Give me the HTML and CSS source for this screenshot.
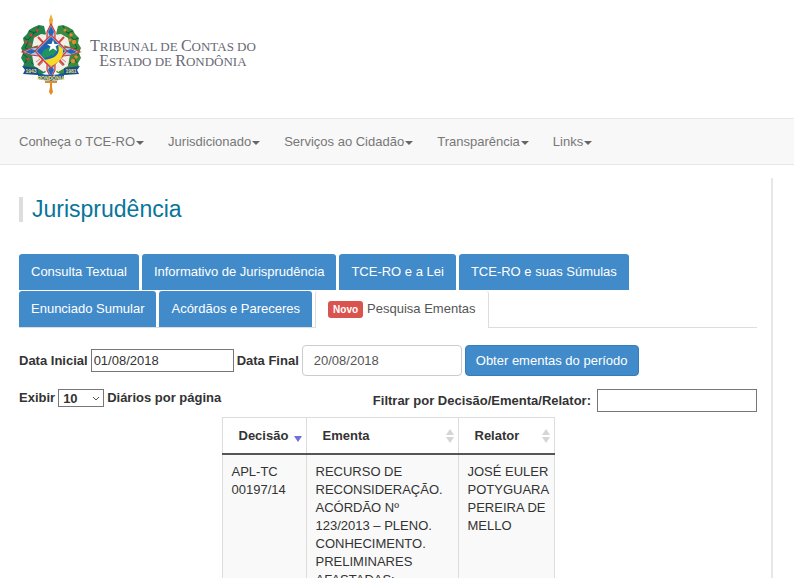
FILE: index.html
```html
<!DOCTYPE html>
<html lang="pt-BR">
<head>
  <meta charset="UTF-8">
  <meta name="viewport" content="width=device-width, initial-scale=1.0">
  <title>Jurisprudência - Tribunal de Contas do Estado de Rondônia</title>
  <link rel="stylesheet" href="styles.css">
</head>
<body>
  <header class="header">
    <svg class="brasao" viewBox="0 0 62 82" aria-hidden="true">
      <!-- ramos -->
      <path d="M24 12L19 11L14 13L9 16L7 20L3 24L4 29L1 34L3 39L1 44L4 49L3 53L8 58L20 61L26 58L14 38L26 20z" fill="#23834a"/>
      <path d="M38 12L43 11L48 13L53 16L55 20L59 24L58 29L61 34L59 39L61 44L58 49L59 53L54 58L42 61L36 58L48 38L36 20z" fill="#3a8a3f"/>
      <path d="M19 12L15 19L9 17M14 19L8 26L4 24M8 28L5 34L10 36M3 40L8 44L5 49M11 48L17 54M43 12L47 19L53 17M48 19L54 26L58 24M54 28L57 34L52 36M59 40L54 44L57 49M51 48L45 54" fill="none" stroke="#0b5b35"/>
      <g fill="#d7442c">
        <circle cx="17" cy="16" r="1.500"/><circle cx="11" cy="21" r="1.500"/><circle cx="15" cy="23" r="1.500"/><circle cx="6" cy="28" r="1.500"/><circle cx="10" cy="30" r="1.500"/><circle cx="8" cy="45" r="1.500"/>
      </g>
      <g fill="#e98a2e">
        <circle cx="45" cy="16" r="1.500"/><circle cx="51" cy="21" r="1.800"/><circle cx="54" cy="28" r="2.200"/><circle cx="50" cy="26" r="1.500"/><circle cx="56" cy="43" r="1.800"/><circle cx="53" cy="47" r="2.200"/>
      </g>
      <path d="M14 24L21 20L28 21L23 30L12 33zM48 24L41 20L34 21L39 30L50 33zM12 41L20 43L27 53L24 58L14 52zM50 41L42 43L35 53L38 58L48 52z" fill="#f3eee8"/>
      <path d="M16 48L20 45M19 52L23 48M46 48L42 45M43 52L39 48" stroke="#b88f86"/>
      <path d="M18 23L44 51M44 23L18 51" stroke="#cf4a45" stroke-width="2"/>
      <!-- espada -->
      <path d="M31 0L33 6L32 14H30L29 6z" fill="#efab37"/>
      <path d="M30 66H32V73L33 78L31 81L29 78L30 73z" fill="#e28b25"/>
      <path d="M25 67H37V69H25z" fill="#e28b25"/>
      <!-- escudo -->
      <path d="M31 10L35 18L35 25L43 33L51 34L60 38L51 41L43 42L35 50L35 56L31 64L27 56L27 50L19 42L11 41L2 38L11 34L19 33L27 25L27 18z" fill="#9bd0f3" stroke="#d93735" stroke-width="1.200"/>
      <path d="M31 12L34 18L31 24L28 18zM31 62L34 56L31 51L28 56zM5 38L11 35L17 37L11 40zM57 38L51 35L45 37L51 40z" fill="#2565b5"/>
      <path d="M31 21L47 37L31 54L15 37z" fill="#9bd0f3" stroke="#d93735" stroke-width="1.200"/>
      <path d="M31 23L45 37L31 52L17 37z" fill="#1e63b4"/>
      <path d="M31 24L20 36L25 41L30 39L33 42L38 35L34 31z" fill="#20955c"/>
      <path d="M31 23L38 30L29 36L20 40L17 37z" fill="#1e63b4"/>
      <path d="M24 36L30 33L34 38L30 42L24 44L21 41z" fill="#20955c"/>
      <path d="M38 31Q42 44 24 46L31 52Q44 47 43 35z" fill="#f8dc23"/>
      <path d="M33 26L34.500 30L39 30L35.500 32.500L37 37L33 34.500L29 37L30.500 32.500L27 30L31.500 30z" fill="#fff"/>
      <!-- faixa -->
      <path d="M2 52L18 54V61L3 60L5 56zM60 52L44 54V61L59 60L57 56z" fill="#154f92"/>
      <path d="M18 59Q31 63 44 59V65Q31 68 18 65z" fill="#1c5b9f"/>
      <g class="faixa-texto">
        <text x="11" y="59">1943</text>
        <text x="51" y="59">1981</text>
        <text x="31" y="66">RONDÔNIA</text>
      </g>
    </svg>
    <div class="orgao">
      <div><b>T</b>ribunal de <b>C</b>ontas do</div>
      <div><b>E</b>stado de <b>R</b>ondônia</div>
    </div>
  </header>

  <nav class="navbar">
    <a href="#">Conheça o TCE-RO<span class="caret"></span></a>
    <a href="#">Jurisdicionado<span class="caret"></span></a>
    <a href="#">Serviços ao Cidadão<span class="caret"></span></a>
    <a href="#">Transparência<span class="caret"></span></a>
    <a href="#">Links<span class="caret"></span></a>
  </nav>

  <main class="conteudo">
    <h1 class="titulo">Jurisprudência</h1>

    <div class="abas">
      <a class="aba" href="#">Consulta Textual</a>
      <a class="aba" href="#">Informativo de Jurisprudência</a>
      <a class="aba" href="#">TCE-RO e a Lei</a>
      <a class="aba" href="#">TCE-RO e suas Súmulas</a>
      <a class="aba" href="#">Enunciado Sumular</a>
      <a class="aba" href="#">Acórdãos e Pareceres</a>
      <a class="aba ativa" href="#"><span class="novo">Novo</span>Pesquisa Ementas</a>
    </div>

    <form class="periodo">
      <label for="dataInicial">Data Inicial</label>
      <input type="text" id="dataInicial" class="data-inicial" value="01/08/2018">
      <label for="dataFinal">Data Final</label>
      <input type="text" id="dataFinal" class="data-final" value="20/08/2018">
      <button type="button" class="btn">Obter ementas do período</button>
    </form>

    <div class="filtros">
      <div class="exibir">
        <label for="qtdPagina">Exibir</label>
        <span class="select-wrap">
          <select id="qtdPagina">
            <option>10</option>
            <option>25</option>
            <option>50</option>
          </select>
          <svg class="seta" viewBox="0 0 8 5" aria-hidden="true"><path d="M1 1L4 4L7 1" fill="none" stroke="#555"/></svg>
        </span>
        <label for="qtdPagina">Diários por página</label>
      </div>
      <div class="filtrar">
        <label for="filtro">Filtrar por Decisão/Ementa/Relator:</label>
        <input type="text" id="filtro">
      </div>
    </div>

    <table class="tabela">
      <thead>
        <tr>
          <th class="col-decisao"><div class="th-in">Decisão<svg class="desc" viewBox="0 0 8 6"><path d="M0 0H8L4 6z" fill="#6f6fe0"/></svg></div></th>
          <th class="col-ementa"><div class="th-in">Ementa<svg class="ordem" viewBox="0 0 8 14"><path d="M0 6L4 0L8 6zM0 8H8L4 14z" fill="#d6d6d6"/></svg></div></th>
          <th class="col-relator"><div class="th-in">Relator<svg class="ordem" viewBox="0 0 8 14"><path d="M0 6L4 0L8 6zM0 8H8L4 14z" fill="#d6d6d6"/></svg></div></th>
        </tr>
      </thead>
      <tbody>
        <tr>
          <td>APL-TC 00197/14</td>
          <td>RECURSO DE RECONSIDERAÇÃO. ACÓRDÃO Nº 123/2013 – PLENO. CONHECIMENTO. PRELIMINARES AFASTADAS:</td>
          <td class="relator">JOSÉ EULER POTYGUARA PEREIRA DE MELLO</td>
        </tr>
      </tbody>
    </table>
  </main>
</body>
</html>
```

FILE: styles.css
```css
* {
  box-sizing: border-box;
}
body {
  margin: 0;
  height: 100vh;
  overflow: hidden;
  display: flex;
  flex-direction: column;
  background-color: #fff;
  color: #333;
  font-family: "Liberation Sans", Arial, sans-serif;
  font-size: 13px;
  line-height: 18px;
}
a {
  text-decoration: none;
}
input, select, button {
  font-family: inherit;
  font-size: 13px;
  color: #333;
}
.header {
  display: flex;
  align-items: flex-start;
  gap: 8px;
  padding: 14px 20px 22px;
}
.brasao {
  width: 62px;
  height: 82px;
}
.faixa-texto {
  fill: #f3df62;
  font-size: 5px;
  font-weight: bold;
  text-anchor: middle;
}
.orgao {
  padding-top: 25px;
  text-align: center;
  text-transform: uppercase;
  color: #686874;
  font-family: "Liberation Serif", "Times New Roman", serif;
  font-size: 13px;
  line-height: 15px;
}
.orgao b {
  font-size: 16px;
  font-weight: normal;
  line-height: 1px;
}
.navbar {
  display: flex;
  gap: 24px;
  padding: 14px 19px 13px;
  background-color: #f8f8f8;
  border-top: 1px solid #e7e7e7;
  border-bottom: 1px solid #e7e7e7;
}
.navbar a {
  color: #777;
}
.caret {
  display: inline-block;
  margin-left: 1px;
  vertical-align: middle;
  border-top: 4px solid #666;
  border-left: 4px solid transparent;
  border-right: 4px solid transparent;
}
.conteudo {
  flex: 1 0 auto;
  margin: 13px 21px 0 0;
  padding: 19px 14px 0 19px;
  border-right: 2px solid #e7e7e7;
}
.titulo {
  margin: 0 0 32px;
  padding-left: 9px;
  border-left: 4px solid #ddd;
  color: #08759b;
  font-size: 23px;
  line-height: 25px;
  font-weight: normal;
}
/* Abas */
.abas {
  display: flex;
  flex-wrap: wrap;
  gap: 1px 3px;
  border-bottom: 1px solid #ddd;
}
.aba {
  padding: 9px 12px;
  border-radius: 3px 3px 0 0;
  background-color: #428bca;
  color: #fff;
}
.ativa {
  margin-bottom: -1px;
  border: 1px solid #ddd;
  border-width: 0 1px;
  background-color: #fff;
  color: #555;
}
.novo {
  margin-right: 4px;
  padding: 3px 5px;
  border-radius: 3px;
  background-color: #d9534f;
  color: #fff;
  font-size: 10px;
  font-weight: bold;
}
/* Período */
.periodo {
  display: flex;
  align-items: center;
  gap: 3px;
  margin-top: 17px;
}
label {
  font-weight: bold;
}
.data-inicial {
  width: 143px;
  height: 23px;
  padding: 1px 2px;
  border: 1px solid #777;
}
.data-final {
  width: 160px;
  height: 31px;
  padding: 5px 11px;
  border: 1px solid #ccc;
  border-radius: 4px;
  color: #555;
}
.btn {
  height: 31px;
  padding: 5px 10px;
  border: 1px solid #357ebd;
  border-radius: 4px;
  background-color: #428bca;
  color: #fff;
}
.filtros {
  display: flex;
  justify-content: space-between;
  align-items: flex-start;
  margin-top: 13px;
}
.exibir, .filtrar {
  display: flex;
  align-items: center;
  gap: 3px;
}
.filtrar {
  gap: 6px;
}
.filtrar input {
  width: 160px;
  height: 23px;
  border: 1px solid #777;
}
.select-wrap {
  position: relative;
  display: flex;
}
.select-wrap select {
  width: 46px;
  height: 18px;
  padding: 0 4px;
  border: 1px solid #777;
  background-color: #fff;
  font-weight: bold;
  appearance: none;
}
.seta {
  position: absolute;
  right: 4px;
  top: 7px;
  width: 8px;
  height: 5px;
  pointer-events: none;
}
/* Tabela */
.tabela {
  width: 333px;
  margin: 5px auto 0;
  border-collapse: collapse;
  table-layout: fixed;
}
.tabela th, .tabela td {
  border: 1px solid #ddd;
  text-align: left;
  vertical-align: top;
}
.tabela th {
  padding: 9px 4px 8px 16px;
  border-bottom: 2px solid #555;
}
.tabela td {
  padding: 8px 9px;
  background-color: #f9f9f9;
}
.tabela .relator {
  padding-right: 4px;
}
.col-decisao {
  width: 84px;
}
.col-ementa {
  width: 152px;
}
.th-in {
  display: flex;
  justify-content: space-between;
  align-items: center;
}
.ordem {
  width: 8px;
  height: 14px;
}
.desc {
  width: 8px;
  height: 6px;
  margin-top: 6px;
}
```
